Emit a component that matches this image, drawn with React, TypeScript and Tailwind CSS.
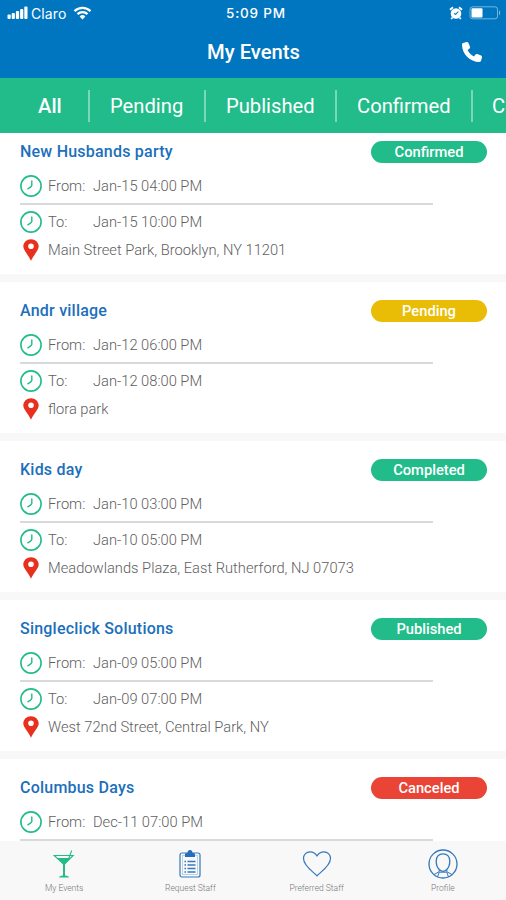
import { FaPhone } from "react-icons/fa6";

type Event = {
    name: string
    status: string
    color: string
    from: string
    to?: string
    place?: string
}

const tabs = [
    { label: "All", box: "w-[90px] pl-[38px] font-medium" },
    { label: "Pending", box: "w-[116px] pl-[20px]" },
    { label: "Published", box: "w-[131px] pl-[20px]" },
    { label: "Confirmed", box: "w-[136px] pl-[20px]" },
    { label: "Completed", box: "w-[136px] pl-[19px]" },
]

const events: Event[] = [
    { name: "New Husbands party", status: "Confirmed", color: "bg-[#21bc8a]", from: "Jan-15 04:00 PM", to: "Jan-15 10:00 PM", place: "Main Street Park, Brooklyn, NY 11201" },
    { name: "Andr village", status: "Pending", color: "bg-[#e9bd06]", from: "Jan-12 06:00 PM", to: "Jan-12 08:00 PM", place: "flora park" },
    { name: "Kids day", status: "Completed", color: "bg-[#21bc8a]", from: "Jan-10 03:00 PM", to: "Jan-10 05:00 PM", place: "Meadowlands Plaza, East Rutherford, NJ 07073" },
    { name: "Singleclick Solutions", status: "Published", color: "bg-[#21bc8a]", from: "Jan-09 05:00 PM", to: "Jan-09 07:00 PM", place: "West 72nd Street, Central Park, NY" },
    { name: "Columbus Days", status: "Canceled", color: "bg-[#ea4436]", from: "Dec-11 07:00 PM" },
]

function Clock () {
    return (
        <svg className="h-[22px] w-[22px] shrink-0" viewBox="0 0 22 22" fill="none" stroke="#21bc8a" strokeLinecap="round" strokeLinejoin="round">
            <circle cx="11" cy="11" r="10.1" strokeWidth="1.6" />
            <path d="M11.8 6V10.500Q11.500 12 7.800 13.800" strokeWidth="1.400" />
        </svg>
    )
}

function Pin () {
    return (
        <svg className="mx-[3px] h-[22px] w-4 shrink-0" viewBox="0 0 16 22">
            <path fillRule="evenodd" fill="#e8301f" d="M8 .3C3.700.3.3 3.400.3 7.600c0 3.800 5 8.300 7.700 14.200 2.700-5.900 7.700-10.400 7.700-14.200C15.700 3.400 12.300.3 8 .3ZM8 4.500a2.800 2.800 0 1 1 0 5.600 2.800 2.800 0 0 1 0-5.600Z" />
        </svg>
    )
}

function StatusBar () {
    return (
        <div className="flex h-[26px] items-center font-[Inter,sans-serif] text-white">
            <div className="flex w-[225px] items-center pl-[7px]">
                <svg className="h-[14px] w-[22px]" viewBox="0 0 22 14" fill="white">
                    <rect x="0.5" y="8.5" width="3.2" height="4.5" rx="1" />
                    <rect x="4.700" y="7" width="3.2" height="6" rx="1" />
                    <rect x="8.900" y="5" width="3.2" height="8" rx="1" />
                    <rect x="13.100" y="3" width="3.2" height="10" rx="1" />
                    <rect x="17.300" y="0.5" width="3.2" height="12.5" rx="1" />
                </svg>
                <span className="ml-[2px] w-[36px] pt-px text-[14px] tracking-[0.1px]">Claro</span>
                <svg className="ml-[6px] h-[14px] w-[19px]" viewBox="0 0 19 14" fill="none" stroke="white" strokeWidth="2.3">
                    <path d="M1.5 5.100a11.500 11.500 0 0 1 16 0" />
                    <path d="M4.5 8.200a7.200 7.200 0 0 1 10 0" />
                    <path d="M9.5 13.500 6.600 10.500a4.200 4.200 0 0 1 5.800 0Z" fill="white" stroke="none" />
                </svg>
            </div>
            <span className="w-[224px] pt-px pl-px text-[13.5px] font-medium tracking-[0.8px]">5:09 PM</span>
            <svg className="h-[14px] w-[14px] shrink-0" viewBox="0 0 14 14">
                <circle cx="7" cy="7.5" r="5.3" fill="white" />
                <path d="M1 3.800 4 1.300M13 3.800l-3-2.500M3.500 11.500 2.200 13M10.500 11.500l1.300 1.500" stroke="white" strokeWidth="1.8" />
                <path d="m5 7.500 1.700.8L9.300 5.500" fill="none" stroke="#0176c0" strokeWidth="1.1" />
            </svg>
            <svg className="ml-[6px] h-[14px] w-[33px] shrink-0" viewBox="0 0 33 14">
                <rect x="1" y="0.8" width="27.5" height="12" rx="2.5" fill="none" stroke="white" strokeOpacity="0.45" strokeWidth="1" />
                <rect x="2.5" y="2.2" width="11" height="9.2" rx="1" fill="white" />
                <path d="M30 4.500c1.500.5 1.500 4.200 0 4.700Z" fill="white" fillOpacity="0.5" />
            </svg>
        </div>
    )
}

function EventCard ({ event } : { event : Event }) {
    return (
        <div className="h-[159px] shrink-0 border-b-8 border-[#f8f8f8] bg-white pt-[18px] pr-[19px] pl-5 text-[14.7px] font-light text-[#606060]">
            <div className="flex h-[22px] items-center justify-between">
                <h2 className="text-[16px] font-medium tracking-[0.22px] text-[#1b6fbb]">{event.name}</h2>
                <span className={`flex h-[22px] w-[116px] items-center justify-center rounded-full text-[14.7px] font-medium text-white ${event.color}`}>{event.status}</span>
            </div>
            <div className="mt-3 flex h-[22px] items-center">
                <Clock />
                <span className="ml-[6px] w-[45px] pt-px">From:</span>
                <span className="pt-px">{event.from}</span>
            </div>
            <div className="mt-[6px] h-[2px] w-[413px] bg-[#d9d9d9]" />
            {event.to && (
                <div className="mt-[6px] flex h-[22px] items-center">
                    <Clock />
                    <span className="ml-[6px] w-[45px]">To:</span>
                    <span>{event.to}</span>
                </div>
            )}
            {event.place && (
                <div className="mt-[6px] flex h-[22px] items-center">
                    <Pin />
                    <span className="ml-[6px]">{event.place}</span>
                </div>
            )}
        </div>
    )
}

function NavBar () {
    return (
        <nav className="grid h-[59px] shrink-0 grid-cols-4 bg-[#f8f8f8] pl-px text-center text-[8.5px] leading-[12px] font-light text-[#777]">
            <div className="flex flex-col items-center pt-[8px]">
                <svg className="h-[30px] w-[22px]" viewBox="0 0 22 30" fill="none" stroke="#21bc8a">
                    <path d="M1.200 6.500h19L11 15.500ZM15.500 10 18.700 1.500" strokeWidth="1.100" />
                    <path d="M5 9.500h12L11 15.500Z" fill="#21bc8a" />
                    <path d="M11 15v12" strokeWidth="2" />
                    <path d="M6 28.500c0-1.500 3-2 5-2s5 .5 5 2Z" fill="#21bc8a" stroke="none" />
                </svg>
                <span className="mt-[3px]">My Events</span>
            </div>
            <div className="flex flex-col items-center pt-[8px]">
                <svg className="h-[30px] w-[22px]" viewBox="0 0 22 30" fill="none" stroke="#3478bd">
                    <rect x="1" y="4" width="20" height="24" rx="2" strokeWidth="1.2" />
                    <path d="M3.500 6.500h15v19h-15Z" strokeWidth="0.5" strokeOpacity="0.6" />
                    <path d="M6 8V5.500C6 4.300 7.200 4 8.500 4c0-1.800 1-3 2.500-3s2.500 1.200 2.500 3c1.300 0 2.500.3 2.500 1.500V8Z" fill="#256fba" stroke="none" />
                    <path d="M5.500 12.500H7M5.500 16H7M5.500 19.500H7M5.500 23H7M8.500 12.500h8M8.500 16h8M8.500 19.500h8M8.500 23h8" strokeWidth="1.3" />
                </svg>
                <span className="mt-[3px]">Request Staff</span>
            </div>
            <div className="flex flex-col items-center pt-[8px]">
                <svg className="h-[30px] w-[30px]" viewBox="0 0 30 30" fill="none" stroke="#3478bd" strokeWidth="1.2" strokeLinejoin="round">
                    <path d="M15 26.800C12 23.500 1.500 17 1.500 9.500 1.500 5.500 4.500 2.800 8 2.800c3 0 5.500 1.400 7 4.200 1.500-2.800 4-4.200 7-4.200 3.500 0 6.500 2.700 6.500 6.700C28.500 17 18 23.500 15 26.800Z" />
                </svg>
                <span className="mt-[3px]">Preferred Staff</span>
            </div>
            <div className="flex flex-col items-center pt-[8px]">
                <svg className="h-[30px] w-[30px]" viewBox="0 0 30 30" fill="none" stroke="#3478bd" strokeWidth="1.3">
                    <circle cx="15" cy="15" r="14" />
                    <path d="M15 4.800c-4.500 0-6.800 3-6.800 7.200 0 3.500 1 6.500 3 8.500 2.300 2.200 5.300 2.200 7.600 0 2-2 3-5 3-8.500 0-4.200-2.300-7.200-6.800-7.200Z" />
                    <path d="M11.200 20.500v2.200l-5.500 3M18.800 20.500v2.200l5.500 3M9.500 28l1.700-4.800h7.600l1.700 4.800" strokeWidth="1" />
                </svg>
                <span className="mt-[3px]">Profile</span>
            </div>
        </nav>
    )
}

export default function App () {
    return (
        <div className="flex h-[900px] w-[506px] flex-col overflow-hidden bg-white font-[Roboto,sans-serif]">
            <header className="h-[78px] shrink-0 bg-[#0176c0]">
                <StatusBar />
                <div className="grid h-[52px] grid-cols-[1fr_auto_1fr] items-center text-white">
                    <h1 className="col-start-2 pt-px pl-px text-[20.2px] font-medium">My Events</h1>
                    <FaPhone className="mr-[24px] h-5 w-5 justify-self-end" />
                </div>
            </header>
            <div className="flex h-[55px] shrink-0 items-center overflow-hidden bg-[#22bc8a] text-[20.2px] text-white">
                {tabs.map((tab) => (
                    <div key={tab.label} className={`flex h-8 shrink-0 items-center border-r-2 border-white/40 pt-[2px] ${tab.box}`}>{tab.label}</div>
                ))}
            </div>
            <main className="min-h-0 flex-1 overflow-hidden">
                <div className="-mt-[10px] flex flex-col">
                    {events.map((event) => <EventCard key={event.name} event={event} />)}
                </div>
            </main>
            <NavBar />
        </div>
    )
}
